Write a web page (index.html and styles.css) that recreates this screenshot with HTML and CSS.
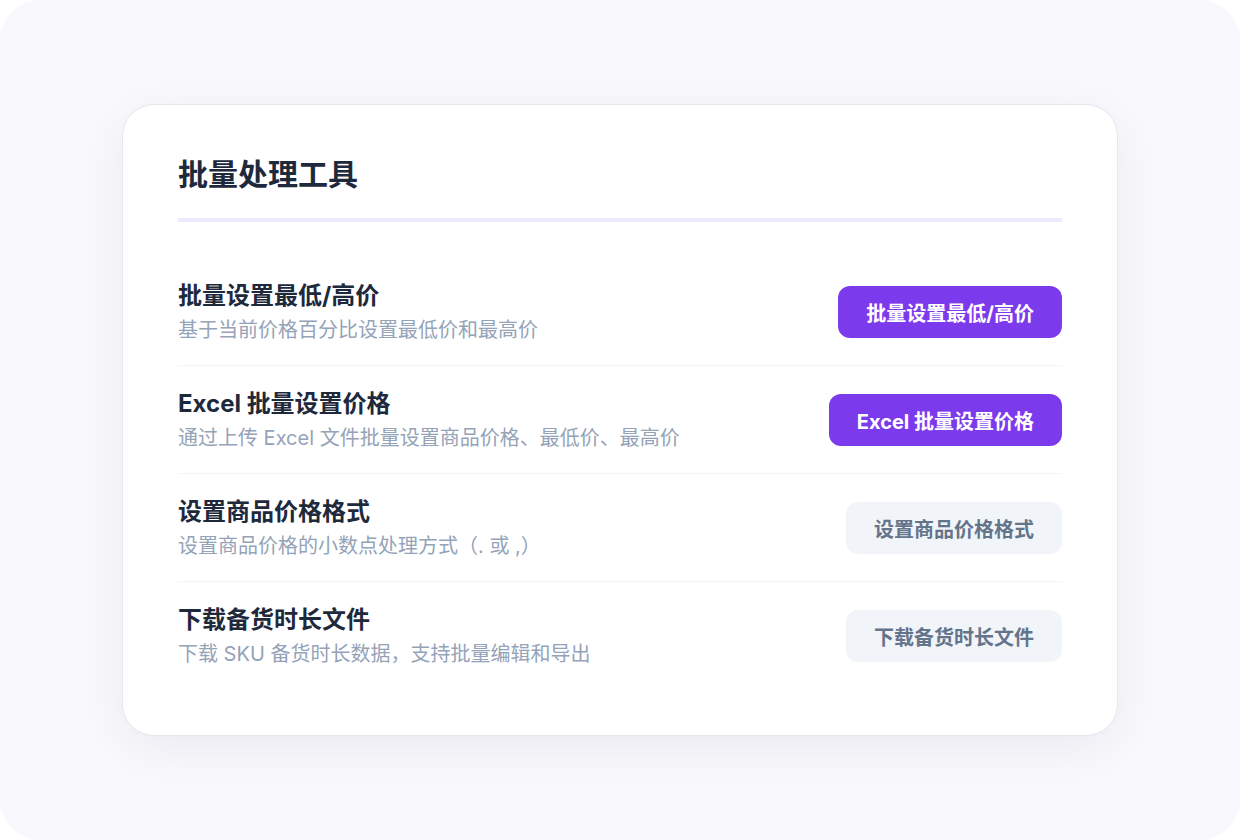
FILE: index.html
```html
<!DOCTYPE html>
<html lang="zh-CN">
<head>
    <meta charset="UTF-8">
    <meta name="viewport" content="width=device-width, initial-scale=1.0">
    <title>批量处理工具</title>
    <link rel="stylesheet" href="styles.css">
</head>
<body>
    <div class="page">
        <div class="card">
            <h1 class="card-title">批量处理工具</h1>

            <div class="tool-list">
                <div class="tool-row">
                    <div class="tool-info">
                        <div class="tool-name">批量设置最低/高价</div>
                        <div class="tool-desc">基于当前价格百分比设置最低价和最高价</div>
                    </div>
                    <button class="btn btn-primary">批量设置最低/高价</button>
                </div>

                <div class="tool-row">
                    <div class="tool-info">
                        <div class="tool-name">Excel 批量设置价格</div>
                        <div class="tool-desc">通过上传 Excel 文件批量设置商品价格、最低价、最高价</div>
                    </div>
                    <button class="btn btn-primary">Excel 批量设置价格</button>
                </div>

                <div class="tool-row">
                    <div class="tool-info">
                        <div class="tool-name">设置商品价格格式</div>
                        <div class="tool-desc">设置商品价格的小数点处理方式（. 或 ,）</div>
                    </div>
                    <button class="btn btn-muted">设置商品价格格式</button>
                </div>

                <div class="tool-row">
                    <div class="tool-info">
                        <div class="tool-name">下载备货时长文件</div>
                        <div class="tool-desc">下载 SKU 备货时长数据，支持批量编辑和导出</div>
                    </div>
                    <button class="btn btn-muted">下载备货时长文件</button>
                </div>
            </div>
        </div>
    </div>
</body>
</html>
```

FILE: styles.css
```css
* { box-sizing: border-box; }

body {
    margin: 0;
    background: #ffffff;
    font-family: 'Inter', 'Noto Sans CJK SC', sans-serif;
}

.page {
    width: 1240px;
    height: 840px;
    background: #f8f8fd;
    border-radius: 40px;
    display: flex;
    align-items: center;
    justify-content: center;
}

.card {
    width: 996px;
    background: #ffffff;
    border: 1px solid #e5e8ee;
    border-radius: 32px;
    padding: 50px 55px 46px;
    box-shadow: 0 12px 48px rgba(15, 23, 42, 0.06);
}

.card-title {
    margin: 0;
    font-size: 30px;
    line-height: 38px;
    font-weight: 700;
    color: #1e293b;
    padding-bottom: 25px;
    border-bottom: 4px solid #ede9fe;
}

.tool-list { margin-top: 36px; }

.tool-row {
    display: flex;
    align-items: center;
    justify-content: space-between;
    padding: 22px 0 21px;
    border-bottom: 1px solid #f3f4f8;
}
.tool-row:last-child { border-bottom: none; }

.tool-name {
    font-size: 24px;
    line-height: 32px;
    font-weight: 700;
    color: #1e293b;
}

.tool-desc {
    margin-top: 4px;
    font-size: 20px;
    line-height: 28px;
    color: #94a3b8;
}

.btn {
    height: 52px;
    padding: 0 28px;
    border: none;
    border-radius: 12px;
    font-family: inherit;
    font-size: 20px;
    font-weight: 700;
    cursor: pointer;
}
.btn-primary { background: #7c3aed; color: #ffffff; }
.btn-primary:hover { background: #6d28d9; }
.btn-muted { background: #f1f5f9; color: #64748b; }
.btn-muted:hover { background: #e2e8f0; }
```
